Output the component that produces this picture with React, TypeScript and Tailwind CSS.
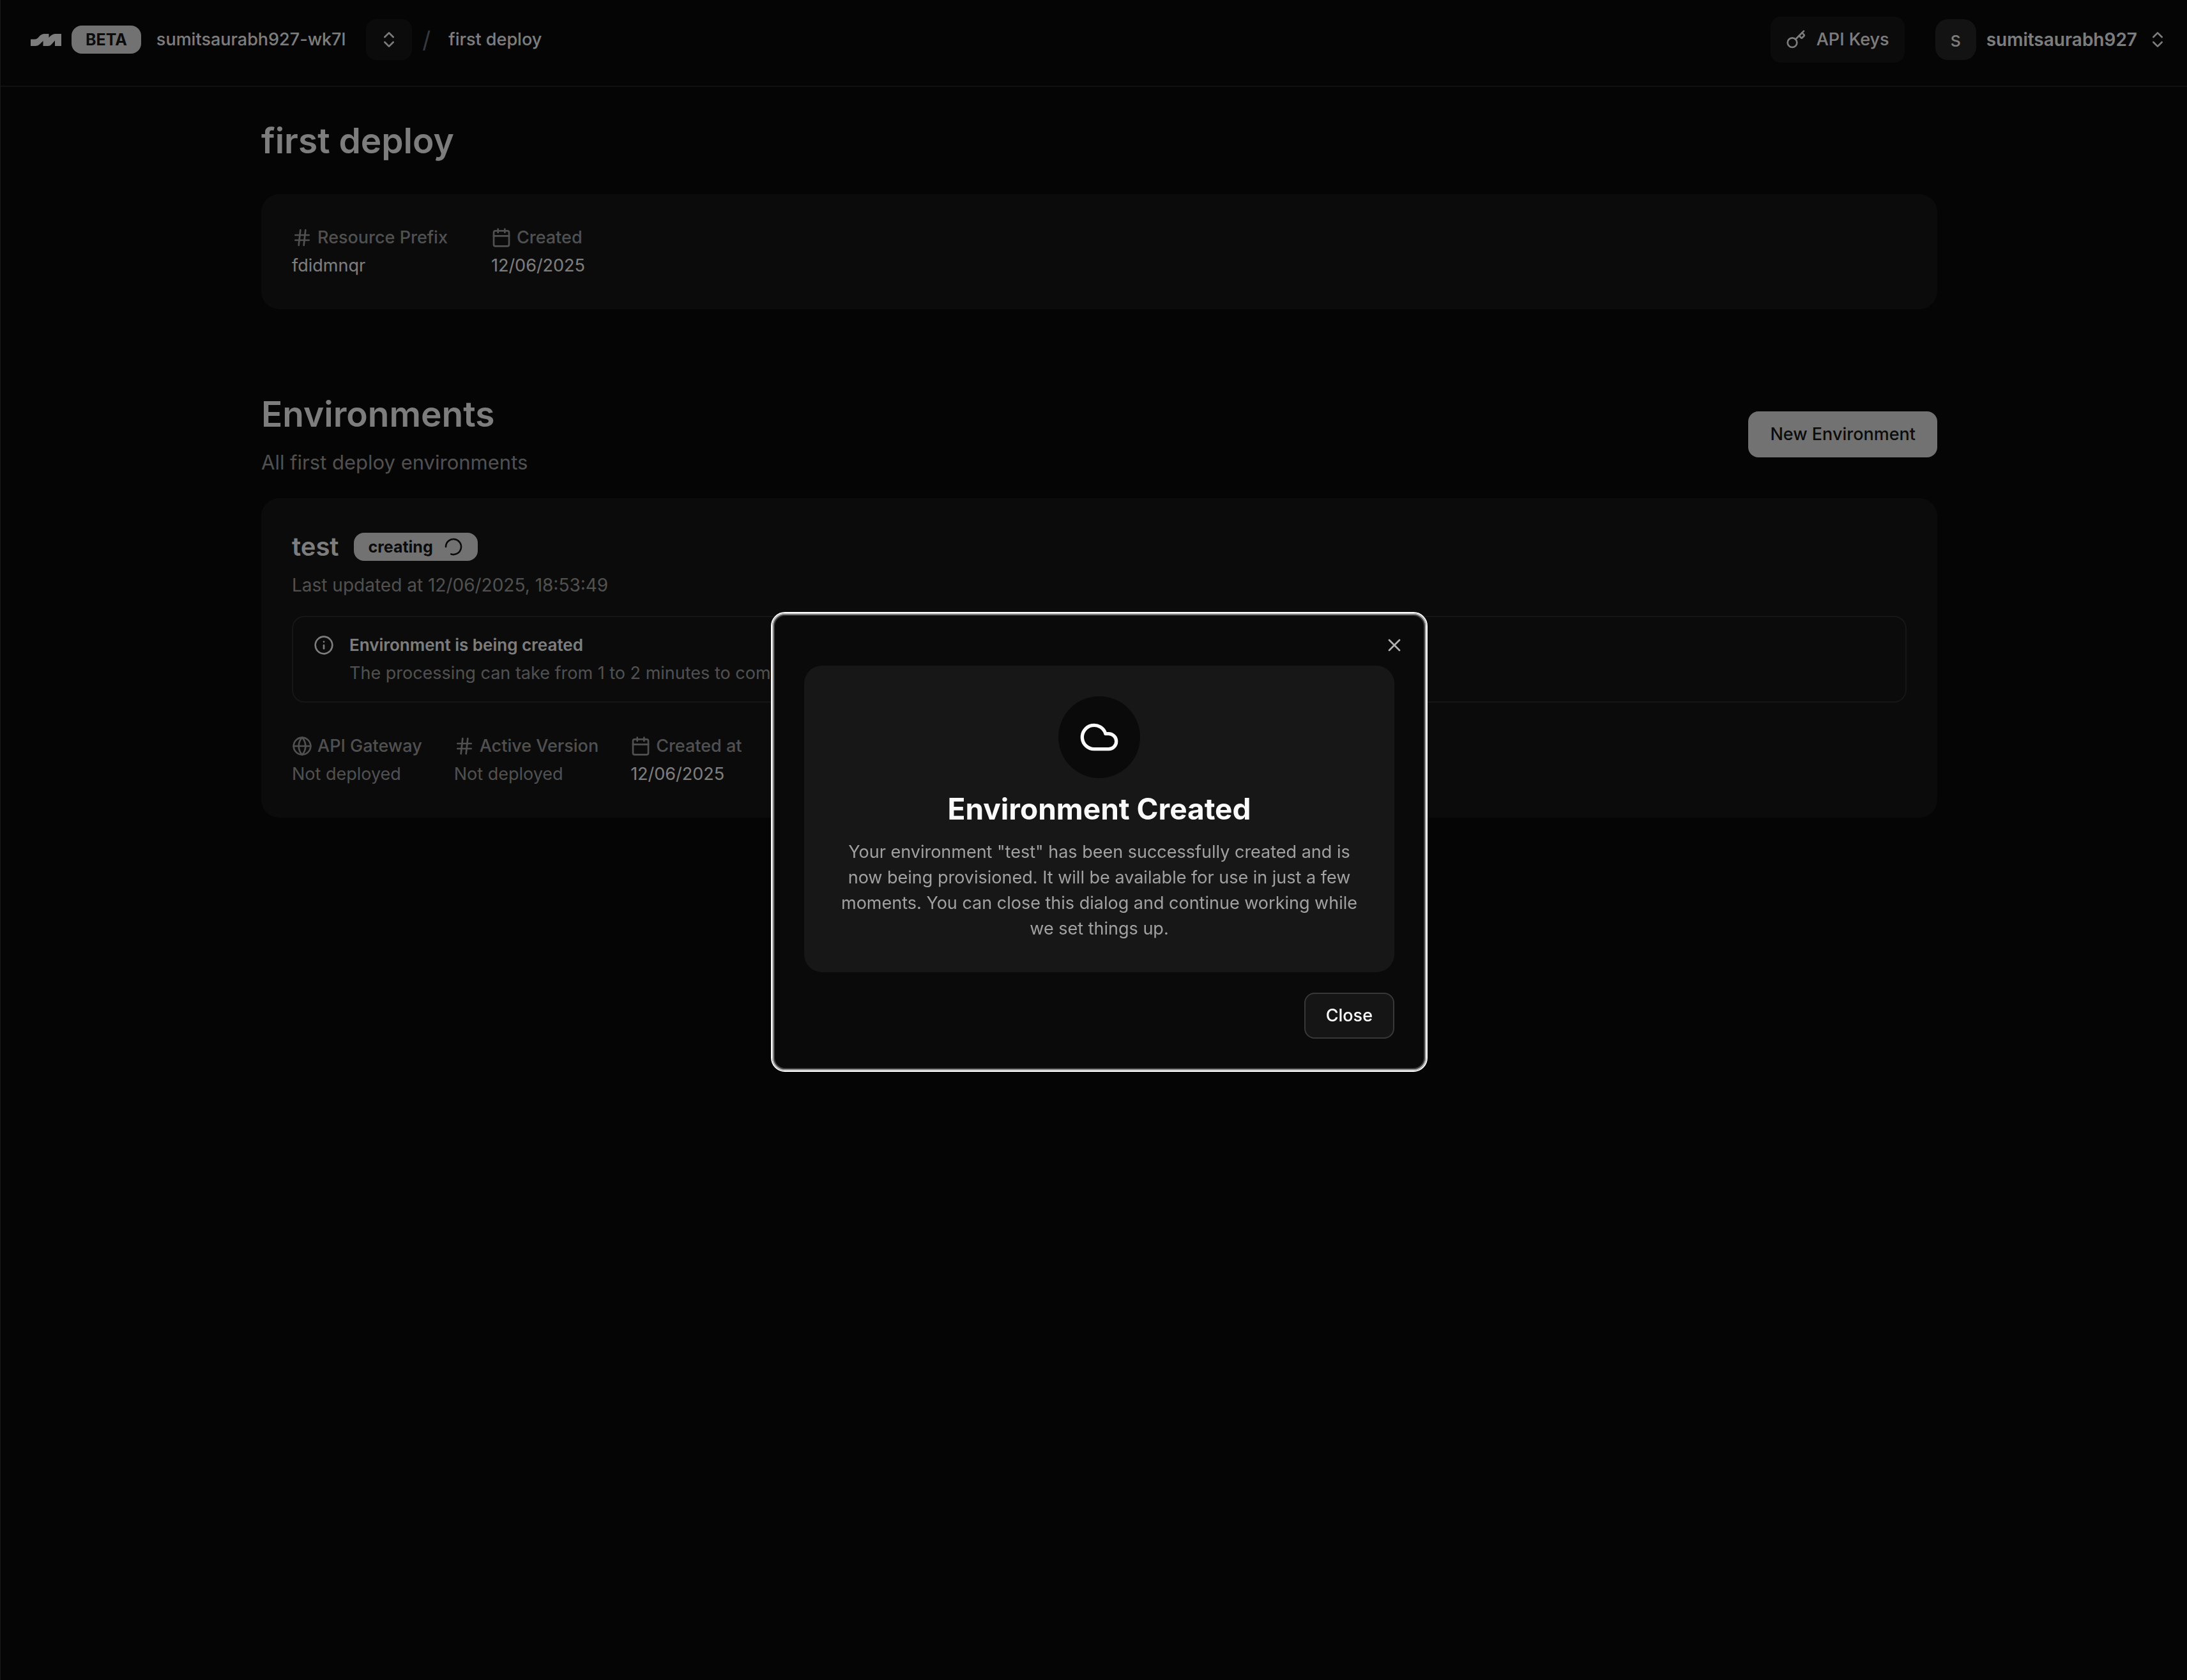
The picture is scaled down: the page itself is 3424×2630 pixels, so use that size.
import type { ReactNode } from "react";
import {
  Calendar,
  ChevronsUpDown,
  Cloud,
  Globe,
  Hash,
  Info,
  Key,
  LoaderCircle,
  X,
} from "lucide-react";

function Logo() {
  return (
    <svg viewBox="0 0 48 19" className="h-[19px] w-12 text-[#fafafa]" fill="currentColor" aria-hidden="true">
      <path d="M0 8.500H6C9 8.500 11 7 13 4.500C15.500 1.500 18 0 22 0H28.500V6C32 1.800 35 0 40 0H48V19H38V10.500L33.500 15.500C31.500 18 30 19 27 19H19.500V11L15 15.500C12.500 18 10.500 19 7 19H0Z" />
    </svg>
  );
}

function Badge({ children }: { children: ReactNode }) {
  return (
    <span className="flex h-11 items-center gap-4 rounded-2xl bg-[#e5e5e5] px-[22px] text-[25px] font-bold leading-8 text-[#171717]">
      {children}
    </span>
  );
}

function Detail({ icon, label, children, muted = false }: { icon: ReactNode; label: string; children: ReactNode; muted?: boolean }) {
  return (
    <div className="flex flex-col gap-1">
      <dt className="flex items-center gap-2 font-medium text-[#a1a1a1]">
        {icon}
        {label}
      </dt>
      <dd className={muted ? "text-[#a1a1a1]" : "text-[#fafafa]"}>{children}</dd>
    </div>
  );
}

function Header() {
  return (
    <header className="flex items-start justify-between border-b-2 border-[#222222] pb-9 pl-[47px] pr-[30px] pt-[26px]">
      <nav className="flex h-[72px] items-center" aria-label="Breadcrumb">
        <a href="#" aria-label="Home" className="mr-4">
          <Logo />
        </a>
        <Badge>BETA</Badge>
        <a href="#" className="ml-6 font-medium">sumitsaurabh927-wk7l</a>
        <button type="button" aria-label="Switch workspace" className="ml-8 flex h-16 w-[72px] items-center justify-center rounded-2xl bg-[#171717]">
          <ChevronsUpDown size={32} />
        </button>
        <span className="ml-4 text-[36px] leading-[56px] text-[#6b7280]">/</span>
        <a href="#" className="ml-7 font-medium">first deploy</a>
      </nav>
      <div className="flex h-[72px] items-center gap-12">
        <button type="button" className="flex h-[72px] items-center gap-4 rounded-2xl bg-[#171717] px-6 font-medium">
          <Key size={32} />
          API Keys
        </button>
        <button type="button" className="flex items-center gap-4 text-[28px] font-semibold">
          <span className="flex size-16 items-center justify-center rounded-[20px] bg-[#262626] text-[32px] font-normal leading-[48px]">s</span>
          sumitsaurabh927
          <ChevronsUpDown size={32} />
        </button>
      </div>
    </header>
  );
}

function EnvironmentDialog() {
  return (
    <div className="fixed inset-0 flex items-center justify-center bg-black/50 pl-[18px] pt-1.5">
      <div
        role="dialog"
        aria-modal="true"
        aria-labelledby="dialog-title"
        aria-describedby="dialog-text"
        className="relative flex w-[1024px] flex-col gap-8 rounded-[20px] border-2 border-[#b5b5b5] bg-[#0a0a0a] px-12 pb-12 pt-20 outline-2 outline-white inset-ring-2 inset-ring-[#404040]"
      >
        <button type="button" aria-label="Close dialog" className="absolute right-8 top-8 text-[#b2b2b2]">
          <X size={32} />
        </button>
        <section className="flex flex-col items-center gap-4 rounded-[28px] bg-[#171717] p-12 text-center">
          <div className="flex size-32 items-center justify-center rounded-full bg-[#0a0a0a]">
            <Cloud size={64} />
          </div>
          <h2 id="dialog-title" className="text-[46px] font-bold leading-[64px]">Environment Created</h2>
          <p id="dialog-text" className="text-[#a1a1a1]">
            Your environment "test" has been successfully created and is now being provisioned. It will be available for use in just a few moments. You can close this dialog and continue working while we set things up.
          </p>
        </section>
        <button type="button" className="h-[72px] self-end rounded-2xl border-2 border-[#383838] bg-[#151515] px-8 font-medium">
          Close
        </button>
      </div>
    </div>
  );
}

export default function App() {
  return (
    <div className="min-h-screen border-l border-[#333333] bg-[#0a0a0a] font-['Inter',sans-serif] text-[27px] leading-10 text-[#fafafa]">
      <Header />
      <main className="pl-[17px]">
        <div className="mx-auto max-w-[2624px] pt-12">
          <h1 className="text-[55px] font-semibold leading-[72px]">first deploy</h1>
          <dl className="mt-12 flex gap-[68px] rounded-[28px] bg-[#171717] p-12">
            <Detail icon={<Hash size={32} />} label="Resource Prefix">fdidmnqr</Detail>
            <Detail icon={<Calendar size={32} />} label="Created">12/06/2025</Detail>
          </dl>

          <div className="mt-32 flex items-center justify-between">
            <div className="flex flex-col gap-4">
              <h2 className="text-[55px] font-semibold leading-[72px]">Environments</h2>
              <p className="text-[31px] leading-[48px] text-[#a1a1a1]">All first deploy environments</p>
            </div>
            <button type="button" className="h-[72px] rounded-2xl bg-[#e5e5e5] px-[34px] font-medium text-[#171717]">
              New Environment
            </button>
          </div>

          <section className="mt-8 rounded-[28px] bg-[#171717] p-12">
            <div className="flex items-center gap-6">
              <h3 className="text-[40px] font-semibold leading-[56px]">test</h3>
              <Badge>
                creating
                <LoaderCircle size={32} className="rotate-180" />
              </Badge>
            </div>
            <p className="mt-3 text-[28px] text-[#a1a1a1]">Last updated at 12/06/2025, 18:53:49</p>
            <div role="status" className="mt-7 flex gap-6 rounded-[20px] border-2 border-[#2c2c2c] px-8 py-6">
              <Info size={32} className="mt-1" />
              <div className="flex flex-col gap-1">
                <p className="text-[26px] font-semibold">Environment is being created</p>
                <p className="text-[#a1a1a1]">The processing can take from 1 to 2 minutes to complete.</p>
              </div>
            </div>
            <dl className="mt-12 flex gap-[50px]">
              <Detail icon={<Globe size={32} />} label="API Gateway" muted>Not deployed</Detail>
              <Detail icon={<Hash size={32} />} label="Active Version" muted>Not deployed</Detail>
              <Detail icon={<Calendar size={32} />} label="Created at">12/06/2025</Detail>
            </dl>
          </section>
        </div>
      </main>
      <EnvironmentDialog />
    </div>
  );
}
